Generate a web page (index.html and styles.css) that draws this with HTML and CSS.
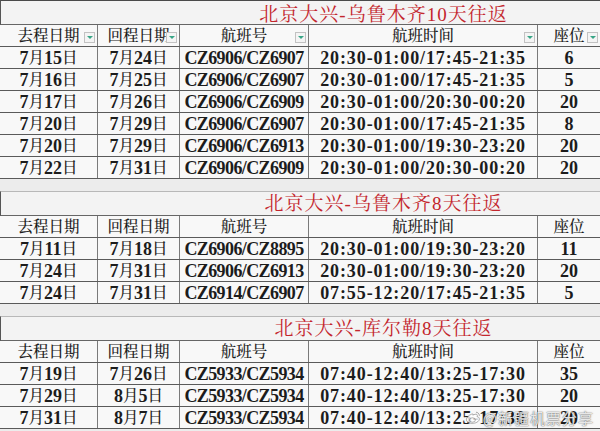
FILE: index.html
```html
<!DOCTYPE html>
<html lang="zh-CN">
<head>
<meta charset="utf-8">
<title>北京大兴往返航班</title>
<link rel="stylesheet" href="styles.css">
</head>
<body>
<div class="sheet">
  <section class="block first">
    <div class="title">北京大兴-乌鲁木齐10天往返</div>
    <div class="row head">
      <div class="cell">去程日期<span class="filter"></span></div>
      <div class="cell">回程日期<span class="filter"></span></div>
      <div class="cell">航班号<span class="filter"></span></div>
      <div class="cell">航班时间<span class="filter"></span></div>
      <div class="cell">座位<span class="filter"></span></div>
    </div>
    <div class="row"><div class="cell">7<span class="cj">月</span>15<span class="cj">日</span></div><div class="cell">7<span class="cj">月</span>24<span class="cj">日</span></div><div class="cell flt">CZ6906/CZ6907</div><div class="cell tm">20:30-01:00/17:45-21:35</div><div class="cell">6</div></div>
    <div class="row"><div class="cell">7<span class="cj">月</span>16<span class="cj">日</span></div><div class="cell">7<span class="cj">月</span>25<span class="cj">日</span></div><div class="cell flt">CZ6906/CZ6907</div><div class="cell tm">20:30-01:00/17:45-21:35</div><div class="cell">5</div></div>
    <div class="row"><div class="cell">7<span class="cj">月</span>17<span class="cj">日</span></div><div class="cell">7<span class="cj">月</span>26<span class="cj">日</span></div><div class="cell flt">CZ6906/CZ6909</div><div class="cell tm">20:30-01:00/20:30-00:20</div><div class="cell">20</div></div>
    <div class="row"><div class="cell">7<span class="cj">月</span>20<span class="cj">日</span></div><div class="cell">7<span class="cj">月</span>29<span class="cj">日</span></div><div class="cell flt">CZ6906/CZ6907</div><div class="cell tm">20:30-01:00/17:45-21:35</div><div class="cell">8</div></div>
    <div class="row"><div class="cell">7<span class="cj">月</span>20<span class="cj">日</span></div><div class="cell">7<span class="cj">月</span>29<span class="cj">日</span></div><div class="cell flt">CZ6906/CZ6913</div><div class="cell tm">20:30-01:00/19:30-23:20</div><div class="cell">20</div></div>
    <div class="row"><div class="cell">7<span class="cj">月</span>22<span class="cj">日</span></div><div class="cell">7<span class="cj">月</span>31<span class="cj">日</span></div><div class="cell flt">CZ6906/CZ6909</div><div class="cell tm">20:30-01:00/20:30-00:20</div><div class="cell">20</div></div>
  </section>
  <div class="gap"></div>
  <section class="block">
    <div class="title">北京大兴-乌鲁木齐8天往返</div>
    <div class="row head">
      <div class="cell">去程日期</div>
      <div class="cell">回程日期</div>
      <div class="cell">航班号</div>
      <div class="cell">航班时间</div>
      <div class="cell">座位</div>
    </div>
    <div class="row"><div class="cell">7<span class="cj">月</span>11<span class="cj">日</span></div><div class="cell">7<span class="cj">月</span>18<span class="cj">日</span></div><div class="cell flt">CZ6906/CZ8895</div><div class="cell tm">20:30-01:00/19:30-23:20</div><div class="cell">11</div></div>
    <div class="row"><div class="cell">7<span class="cj">月</span>24<span class="cj">日</span></div><div class="cell">7<span class="cj">月</span>31<span class="cj">日</span></div><div class="cell flt">CZ6906/CZ6913</div><div class="cell tm">20:30-01:00/19:30-23:20</div><div class="cell">20</div></div>
    <div class="row"><div class="cell">7<span class="cj">月</span>24<span class="cj">日</span></div><div class="cell">7<span class="cj">月</span>31<span class="cj">日</span></div><div class="cell flt">CZ6914/CZ6907</div><div class="cell tm">07:55-12:20/17:45-21:35</div><div class="cell">5</div></div>
  </section>
  <div class="gap"></div>
  <section class="block">
    <div class="title">北京大兴-库尔勒8天往返</div>
    <div class="row head">
      <div class="cell">去程日期</div>
      <div class="cell">回程日期</div>
      <div class="cell">航班号</div>
      <div class="cell">航班时间</div>
      <div class="cell">座位</div>
    </div>
    <div class="row"><div class="cell">7<span class="cj">月</span>19<span class="cj">日</span></div><div class="cell">7<span class="cj">月</span>26<span class="cj">日</span></div><div class="cell flt">CZ5933/CZ5934</div><div class="cell tm">07:40-12:40/13:25-17:30</div><div class="cell">35</div></div>
    <div class="row"><div class="cell">7<span class="cj">月</span>29<span class="cj">日</span></div><div class="cell">8<span class="cj">月</span>5<span class="cj">日</span></div><div class="cell flt">CZ5933/CZ5934</div><div class="cell tm">07:40-12:40/13:25-17:30</div><div class="cell">20</div></div>
    <div class="row"><div class="cell">7<span class="cj">月</span>31<span class="cj">日</span></div><div class="cell">8<span class="cj">月</span>7<span class="cj">日</span></div><div class="cell flt">CZ5933/CZ5934</div><div class="cell tm">07:40-12:40/13:25-17:30</div><div class="cell">20</div></div>
  </section>
  <div class="watermark">
    <svg class="wb" width="16" height="14" viewBox="0 0 16 14"><path d="M6.5 3.2C3.6 4.4 1.2 6.6 1.4 8.8c.2 2.4 3.4 3.9 7 3.5 3.7-.4 6.2-2.5 5.9-4.7-.2-1.3-1.3-1.7-2.3-1.9.4-.9.5-1.8-.1-2.2-.8-.6-2.6-.1-4.1.6.3-.9.2-1.6-1.3-.9z" fill="rgba(255,255,255,0.8)" stroke="rgba(90,90,90,0.6)" stroke-width="0.8"/><ellipse cx="7.4" cy="9" rx="3" ry="2.2" fill="none" stroke="rgba(90,90,90,0.6)" stroke-width="0.8"/><path d="M11 1.2c1.8.1 3.4 1.6 3.4 3.6" fill="none" stroke="rgba(90,90,90,0.6)" stroke-width="0.9"/></svg>
    <span class="wm-text">@新疆机票分享</span>
  </div>
</div>
</body>
</html>
```

FILE: styles.css
```css
* {
  box-sizing: border-box;
}

html,
body {
  margin: 0;
}

body {
  width: 600px;
  height: 431px;
  overflow: hidden;
  background: #ececec;
  font-family: "Liberation Serif", "Noto Serif CJK SC", "Noto Sans CJK SC", serif;
  color: #1c1c1c;
}

.sheet {
  position: relative;
  display: flex;
  flex-direction: column;
  height: 431px;
}

.block {
  display: flex;
  flex-direction: column;
}

.title {
  height: 25px;
  padding-left: 166px;
  background: #f3f3f3;
  border-top: 1px solid #b8b8b8;
  border-bottom: 1px solid #666;
  border-left: 1px solid #555;
  display: flex;
  align-items: center;
  justify-content: center;
  color: #c3262d;
  font-size: 19px;
  letter-spacing: 1px;
  line-height: 20px;
  white-space: nowrap;
}

.first .title {
  border-top-color: #4a4a4a;
  padding-top: 5px;
}

.row {
  display: grid;
  grid-template-columns: 98px 82px 129px 229px 62px;
  height: 22px;
  border-bottom: 1px solid #5a5a5a;
}

.cell {
  position: relative;
  display: flex;
  align-items: center;
  justify-content: center;
  background: #f8f8f8;
  border-right: 1px solid #7a7a7a;
  font-size: 18px;
  font-weight: bold;
  white-space: nowrap;
  line-height: 20px;
}

.cell:last-child {
  border-right: none;
}

.cj {
  font-size: 15.5px;
  font-weight: 500;
}

.head .cell {
  font-size: 15.5px;
  font-weight: 500;
}

.flt {
  letter-spacing: -0.6px;
}

.tm {
  letter-spacing: 0.9px;
}

.filter {
  position: absolute;
  right: 2px;
  top: 7px;
  width: 11px;
  height: 11px;
  background: #f4f4f4;
  border: 1px solid #c2c2c2;
}

.filter::after {
  content: "";
  position: absolute;
  left: 2px;
  top: 3px;
  border-left: 3px solid transparent;
  border-right: 3px solid transparent;
  border-top: 3px solid #38a586;
}

.gap {
  height: 12px;
  flex: none;
}

.watermark {
  position: absolute;
  right: 6px;
  bottom: 3px;
  display: flex;
  align-items: center;
  gap: 2px;
}

.wm-text {
  font-family: "Noto Sans CJK SC", sans-serif;
  font-size: 15px;
  color: rgba(255, 255, 255, 0.85);
  text-shadow: 0 0 1px rgba(60, 60, 60, 0.8), 0 0 2px rgba(60, 60, 60, 0.5);
  letter-spacing: 1px;
}
```
